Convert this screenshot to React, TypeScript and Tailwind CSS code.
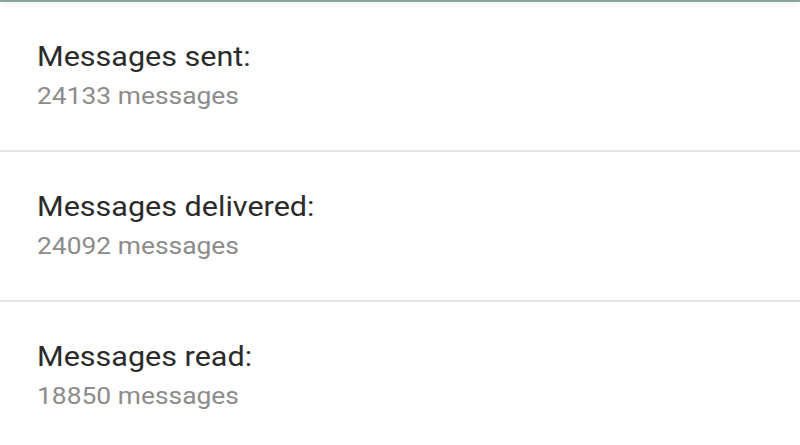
import React from "react";

interface statProps {
  id: string;
  label: string;
  count: number;
}

const stats: statProps[] = [
  { id: "01", label: "Messages sent:", count: 24133 },
  { id: "02", label: "Messages delivered:", count: 24092 },
  { id: "03", label: "Messages read:", count: 18850 },
];

function App() {
  return (
    <div className="w-[800px] h-[445px] overflow-hidden bg-white font-['Roboto',sans-serif]">
      <div className="h-[2px] bg-[#86a69e] shadow-[0_2px_6px_rgba(0,0,0,0.12)]" />
      <ul>
        {stats.map((stat, idx) => (
          <li
            key={stat.id}
            className={
              idx < stats.length - 1
                ? "h-[150px] border-b-2 border-[#e6e6e6] pl-[37px] pt-[37px]"
                : "h-[150px] pl-[37px] pt-[37px]"
            }
          >
            <p className="text-[28px] leading-[36px] text-[#2b2b2b] origin-left scale-x-[1.09]">
              {stat.label}
            </p>
            <p className="mt-[5px] text-[24px] leading-[32px] text-[#8c8c8c] origin-left scale-x-[1.1]">
              {stat.count} messages
            </p>
          </li>
        ))}
      </ul>
    </div>
  );
}

export default App;
